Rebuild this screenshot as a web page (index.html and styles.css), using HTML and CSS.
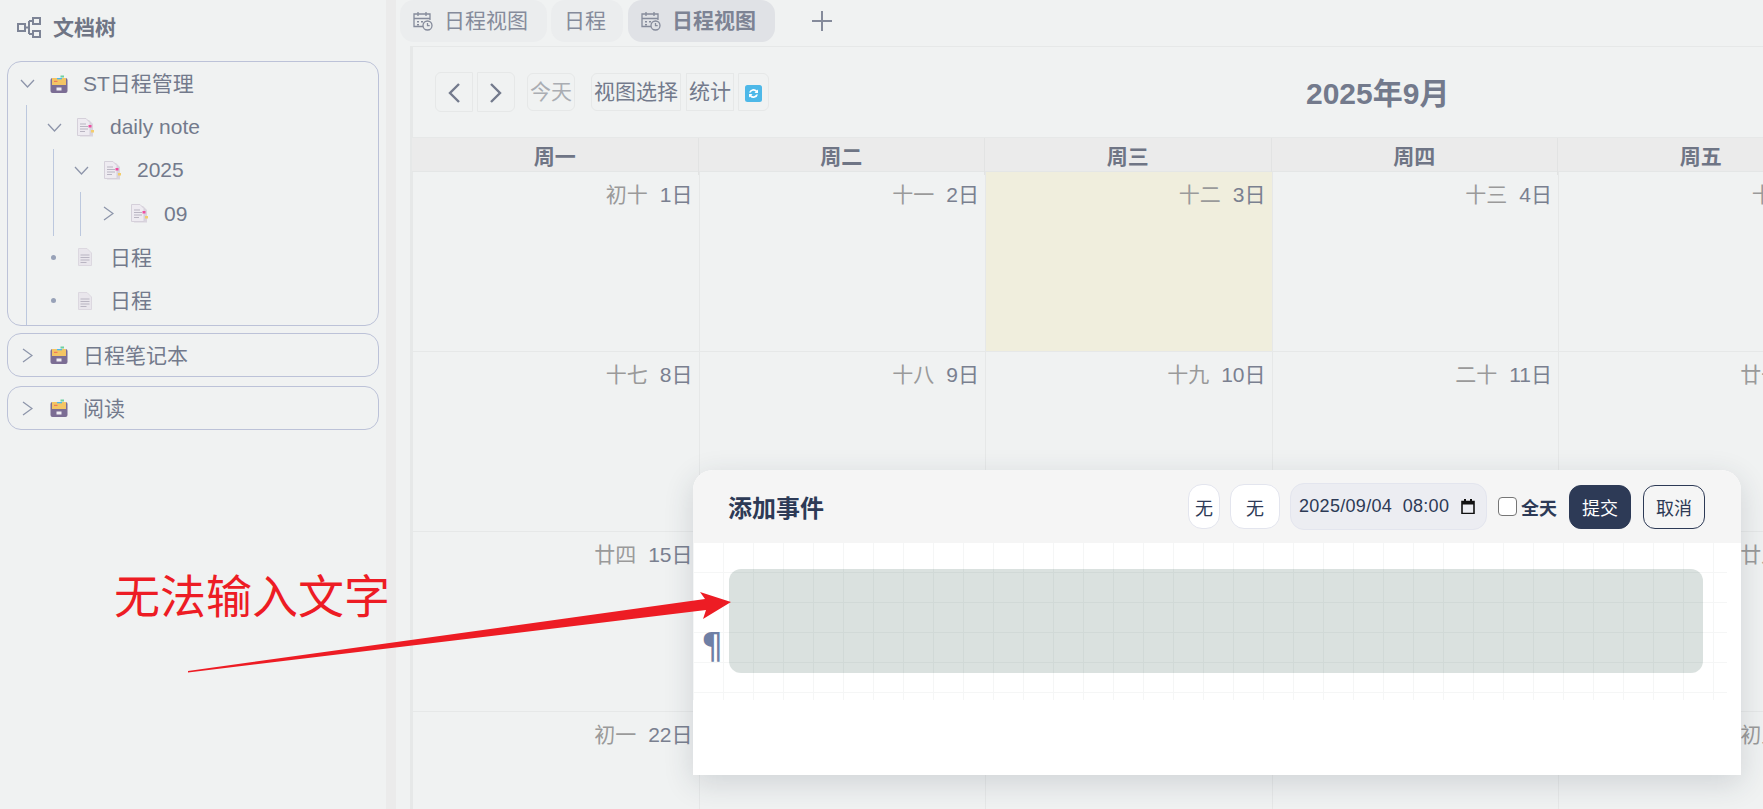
FILE: index.html
```html
<!DOCTYPE html>
<html lang="zh-CN">
<head>
    <meta charset="UTF-8">
    <meta name="viewport" content="width=device-width, initial-scale=1.0">
    <title>日程视图</title>
    <link rel="stylesheet" href="styles.css">
</head>
<body>
    <!-- shared icons -->
    <svg class="icon-defs" aria-hidden="true">
        <symbol id="i-down" viewBox="0 0 15 9"><path d="M1 1l6.500 7L14 1" fill="none" stroke="currentColor" stroke-width="1.300"/></symbol>
        <symbol id="i-right" viewBox="0 0 11 15"><path d="M1 1l9 6.500L1 14" fill="none" stroke="currentColor" stroke-width="1.300"/></symbol>
        <symbol id="i-box" viewBox="0 0 18 18">
            <path d="M.5 5a2 2 0 0 1 2-2h13a2 2 0 0 1 2 2v11a2 2 0 0 1-2 2h-13a2 2 0 0 1-2-2z" fill="#7b6d94"/>
            <path d="M2 3h14v7H2z" fill="#f4c564"/>
            <path d="M10.500 0.500h3.500v2h-3.500z" fill="#6fd1a0"/>
            <path d="M7 3h5v1.300H7z" fill="#4db8e8"/>
            <path d="M4 5.800h3.500v1.200H4z" fill="#ee7a5a"/>
            <path d="M6.500 12.500h5v3h-5z" fill="#f0eef4"/>
        </symbol>
        <symbol id="i-note" viewBox="0 0 17 19">
            <path d="M3 2h9l4 4v12.500H3z" fill="#d9d4de"/>
            <path d="M.5.5h8.500l4 4v13H.5z" fill="#eeebf1" stroke="#d5d0da"/>
            <path d="M3 6h6M3 8.500h8M3 11h8M3 13.500h5" stroke="#b9b5c2"/>
            <path d="M11.500 7h3v2.500h-3z" fill="#ee4fa0"/>
            <path d="M14 12h3v2.500h-3z" fill="#f3cd6c"/>
        </symbol>
        <symbol id="i-doc" viewBox="0 0 14 18">
            <path d="M.5.5h8.500l4.500 4.500v12.500H.5z" fill="#e9e6ec" stroke="#dcd8e0"/>
            <path d="M2.500 7h9M2.500 9.500h9M2.500 12h9M2.500 14.500h6" stroke="#b9b5c2"/>
        </symbol>
        <symbol id="i-cal" viewBox="0 0 20 20">
            <g fill="none" stroke="currentColor" stroke-width="1.300">
                <path d="M10 15.500H1V3h16v6M1 7.500h16M5 1v4M13 1v4"/>
                <circle cx="14.500" cy="14.500" r="4.500"/>
                <path d="M14.500 12v2.700h2.200"/>
            </g>
            <path d="M4 10h2v1.500H4zM8 10h2v1.500H8zM4 13h2v1.500H4z" fill="currentColor"/>
        </symbol>
    </svg>

    <div class="app">
        <aside class="sidebar">
            <h2 class="sidebar-title">
                <svg class="tree-logo" viewBox="0 0 24 21"><path d="M1 7h7v7H1zM16 1h7v6h-7zM16 14h7v6h-7zM8 10.500h4M12 4v13M12 4h4M12 17h4" fill="none" stroke="currentColor" stroke-width="2"/></svg>
                文档树
            </h2>

            <div class="notebook">
                <div class="row"><svg class="chev"><use href="#i-down"/></svg><svg class="ico-box"><use href="#i-box"/></svg><span>ST日程管理</span></div>
                <ul class="children">
                    <li>
                        <div class="row"><svg class="chev"><use href="#i-down"/></svg><svg class="ico-note"><use href="#i-note"/></svg><span class="latin">daily note</span></div>
                        <ul class="children">
                            <li>
                                <div class="row"><svg class="chev"><use href="#i-down"/></svg><svg class="ico-note"><use href="#i-note"/></svg><span class="latin">2025</span></div>
                                <ul class="children">
                                    <li><div class="row"><svg class="chev chev-right"><use href="#i-right"/></svg><svg class="ico-note"><use href="#i-note"/></svg><span class="latin">09</span></div></li>
                                </ul>
                            </li>
                        </ul>
                    </li>
                    <li><div class="row"><i class="dot"></i><svg class="ico-doc"><use href="#i-doc"/></svg><span>日程</span></div></li>
                    <li><div class="row"><i class="dot"></i><svg class="ico-doc"><use href="#i-doc"/></svg><span>日程</span></div></li>
                </ul>
            </div>

            <div class="notebook notebook-closed">
                <div class="row"><svg class="chev chev-right"><use href="#i-right"/></svg><svg class="ico-box"><use href="#i-box"/></svg><span>日程笔记本</span></div>
            </div>
            <div class="notebook notebook-closed">
                <div class="row"><svg class="chev chev-right"><use href="#i-right"/></svg><svg class="ico-box"><use href="#i-box"/></svg><span>阅读</span></div>
            </div>
        </aside>

        <div class="gutter"></div>

        <main class="main">
            <div class="tabs">
                <div class="tab tab-first"><svg class="tab-icon"><use href="#i-cal"/></svg>日程视图</div>
                <div class="tab tab-plain">日程</div>
                <div class="tab tab-active"><svg class="tab-icon"><use href="#i-cal"/></svg>日程视图</div>
                <div class="tab-add">
                    <svg viewBox="0 0 20 20"><path d="M10 0v20M0 10h20" stroke="currentColor" stroke-width="2"/></svg>
                </div>
            </div>

            <section class="calendar">
                <div class="toolbar">
                    <div class="tool-group">
                        <button class="btn btn-nav btn-left"><svg viewBox="0 0 14 22"><path d="M12 2L3 11l9 9" fill="none" stroke="currentColor" stroke-width="2.400"/></svg></button>
                        <button class="btn btn-nav btn-right"><svg viewBox="0 0 14 22"><path d="M2 2l9 9-9 9" fill="none" stroke="currentColor" stroke-width="2.400"/></svg></button>
                        <button class="btn btn-today">今天</button>
                        <button class="btn btn-view">视图选择</button>
                        <button class="btn btn-stat">统计</button>
                        <button class="btn btn-refresh">
                            <svg viewBox="0 0 17 17">
                                <rect width="17" height="17" rx="2.500" fill="#4db8e8"/>
                                <path d="M4 7.500a4.700 4.700 0 0 1 8-2l1-1v3.500H9.500l1.200-1.200A3 3 0 0 0 5.800 7.500zM13 9.500a4.700 4.700 0 0 1-8 2l-1 1V9h3.500l-1.200 1.200a3 3 0 0 0 4.900-.7z" fill="#fff"/>
                            </svg>
                        </button>
                    </div>
                    <h1 class="month-title">2025年9月</h1>
                </div>

                <div class="week-head">
                    <div>周一</div><div>周二</div><div>周三</div><div>周四</div><div>周五</div>
                </div>

                <div class="month-grid">
                    <div class="day"><span class="lunar">初十</span>1日</div>
                    <div class="day"><span class="lunar">十一</span>2日</div>
                    <div class="day day-today"><span class="lunar">十二</span>3日</div>
                    <div class="day"><span class="lunar">十三</span>4日</div>
                    <div class="day"><span class="lunar">十四</span>5日</div>

                    <div class="day"><span class="lunar">十七</span>8日</div>
                    <div class="day"><span class="lunar">十八</span>9日</div>
                    <div class="day"><span class="lunar">十九</span>10日</div>
                    <div class="day"><span class="lunar">二十</span>11日</div>
                    <div class="day"><span class="lunar">廿一</span>12日</div>

                    <div class="day"><span class="lunar">廿四</span>15日</div>
                    <div class="day"><span class="lunar">廿五</span>16日</div>
                    <div class="day"><span class="lunar">廿六</span>17日</div>
                    <div class="day"><span class="lunar">廿七</span>18日</div>
                    <div class="day"><span class="lunar">廿八</span>19日</div>

                    <div class="day"><span class="lunar">初一</span>22日</div>
                    <div class="day"><span class="lunar">初二</span>23日</div>
                    <div class="day"><span class="lunar">初三</span>24日</div>
                    <div class="day"><span class="lunar">初四</span>25日</div>
                    <div class="day"><span class="lunar">初五</span>26日</div>
                </div>
            </section>
        </main>
    </div>

    <!-- add event dialog -->
    <div class="modal">
        <div class="modal-head">
            <h3 class="modal-title">添加事件</h3>
            <div class="modal-controls">
                <button class="pill pill-narrow">无</button>
                <button class="pill pill-wide">无</button>
                <div class="date-field">
                    <span>2025/09/04&nbsp; 08:00</span>
                    <svg viewBox="0 0 14 15"><path d="M1 2.500h12v12H1z" fill="none" stroke="#111" stroke-width="1.600"/><path d="M1 2.500h12v3H1zM3 0h2v3H3zM9 0h2v3H9z" fill="#111"/></svg>
                </div>
                <label class="allday"><input type="checkbox">全天</label>
                <button class="action action-submit">提交</button>
                <button class="action action-cancel">取消</button>
            </div>
        </div>
        <div class="modal-body">
            <div class="editor">
                <span class="pilcrow">¶</span>
                <div class="editor-block"></div>
            </div>
        </div>
    </div>

    <!-- red annotation on top of the screenshot -->
    <div class="note-text">无法输入文字</div>
    <svg class="note-arrow" viewBox="0 0 1763 809">
        <polygon points="188,671 705,599 700,592 731,602 703,619 706,610 188,672.500" fill="#ed1c24"/>
    </svg>
</body>
</html>
```

FILE: styles.css
```css
* {
    box-sizing: border-box;
}

html, body {
    height: 100%;
}

body {
    margin: 0;
    overflow: hidden;
    background-color: #f0f2f2;
    color: #6f7585;
    font-family: "Liberation Sans", "Noto Sans CJK SC", sans-serif;
    font-size: 21px;
}

button {
    font-family: inherit;
    cursor: pointer;
}

.icon-defs {
    display: none;
}

.app {
    display: flex;
    height: 100%;
}

/* sidebar */
.sidebar {
    flex: 0 0 386px;
    padding: 0 7px;
    border-top-right-radius: 6px;
}

.sidebar-title {
    display: flex;
    align-items: center;
    height: 55px;
    margin: 0 0 6px;
    padding: 0 0 4px 10px;
    font-size: 21px;
    font-weight: bold;
    color: #6f7585;
}

.tree-logo {
    width: 24px;
    height: 21px;
    margin: 4px 12px 0 0;
    color: #7d8496;
}

.notebook {
    margin-bottom: 7px;
    border: 1px solid #bcc2d8;
    border-radius: 14px;
}

.notebook-closed {
    margin-bottom: 9px;
}

.notebook > .children {
    padding-bottom: 3px;
}

.row {
    display: flex;
    align-items: center;
    height: 43.4px;
    padding-left: 12px;
    color: #737a8c;
}

.row span {
    padding-bottom: 3px;
}

.row .latin {
    padding-bottom: 0;
}

.notebook-closed .row {
    height: 41.8px;
}

.children {
    list-style: none;
    margin: 0 0 0 18px;
    padding: 0 0 0 8px;
    border-left: 1px solid #bcc8de;
}

.chev {
    flex: none;
    width: 15px;
    height: 9px;
    margin-right: 15px;
    color: #8d95aa;
}

.chev-right {
    width: 11px;
    height: 15px;
    margin-left: 2px;
    margin-right: 17px;
}

.dot {
    flex: none;
    width: 5px;
    height: 5px;
    margin: 0 20px 0 4px;
    border-radius: 50%;
    background-color: #98a2b8;
}

.ico-box {
    width: 18px;
    height: 18px;
    margin-right: 15px;
}

.ico-note {
    width: 17px;
    height: 19px;
    margin-right: 16px;
}

.ico-doc {
    width: 14px;
    height: 18px;
    margin: 0 18px 0 2px;
}

.gutter {
    flex: 0 0 10px;
    background-color: #ebebeb;
}

/* tabs */
.main {
    flex: 1;
    min-width: 0;
    overflow: hidden;
}

.tabs {
    display: flex;
    align-items: center;
    height: 42px;
    margin: 0 0 4px 4px;
    gap: 4px;
}

.tab {
    display: flex;
    align-items: center;
    height: 42px;
    padding-bottom: 4px;
    background-color: #ebedee;
    color: #858b9b;
    white-space: nowrap;
}

.tab-first {
    width: 147px;
    padding-left: 13px;
    border-radius: 14px;
}

.tab-plain {
    width: 72px;
    padding-right: 4px;
    justify-content: center;
    border-radius: 14px;
}

.tab-active {
    width: 147px;
    margin-left: 1px;
    padding-left: 13px;
    border-radius: 14px;
    background-color: #e0e2e6;
    font-weight: bold;
    color: #7d8394;
}

.tab-icon {
    width: 20px;
    height: 20px;
    margin: 4px 11px 0 0;
    color: #858b9b;
}

.tab-add {
    width: 20px;
    height: 20px;
    margin-left: 33px;
    color: #858b9b;
}

.tab-add svg {
    display: block;
}

/* calendar */
.calendar {
    width: 2100px;
    height: 800px;
    margin-left: 14px;
    border-top: 1px solid #e6e8e8;
    border-left: 3px solid #e6e8e8;
}

.toolbar {
    display: flex;
    align-items: center;
    height: 90px;
    padding-left: 22px;
}

.tool-group {
    display: flex;
    align-items: center;
}

.btn {
    height: 38px;
    padding: 0 0 5px;
    border: 1px solid #e6e8e8;
    border-radius: 0;
    background: none;
    color: #737a8c;
    font-size: 21px;
    white-space: nowrap;
}

.btn-nav {
    width: 38px;
    height: 40px;
    padding: 0;
    color: #737a8c;
}

.btn-nav svg {
    width: 14px;
    height: 22px;
    vertical-align: middle;
}

.btn-left {
    border-radius: 6px 0 0 6px;
    margin-right: 4px;
}

.btn-right {
    border-radius: 0 6px 6px 0;
    margin-right: 12px;
}

.btn-today {
    width: 48px;
    margin-right: 16px;
    border-radius: 6px;
    color: #aaadb3;
}

.btn-view {
    width: 90px;
    margin-right: 5px;
    border-radius: 6px 0 0 6px;
}

.btn-stat {
    width: 48px;
    margin-right: 4px;
}

.btn-refresh {
    width: 31px;
    padding: 0;
    border-radius: 0 6px 6px 0;
}

.btn-refresh svg {
    width: 17px;
    height: 17px;
    vertical-align: middle;
}

.month-title {
    margin: 0 0 2px 537px;
    font-size: 30px;
    font-weight: bold;
    color: #737a8c;
}

.week-head,
.month-grid {
    display: grid;
    grid-template-columns: repeat(5, 286.5px);
}

.week-head {
    height: 35px;
    margin-left: -1px;
    background-color: #ebebeb;
    border-top: 1px solid #e6e8e8;
    border-bottom: 1px solid #e4e6e6;
}

.week-head div {
    border-right: 1px solid #e2e3e3;
    line-height: 37px;
    text-align: center;
    font-weight: bold;
    color: #6f7585;
}

.month-grid {
    grid-auto-rows: 180px;
}

.day {
    padding: 10px 6px 0 0;
    border-right: 1px solid #e6e8e8;
    border-bottom: 1px solid #e6e8e8;
    text-align: right;
    color: #7a8090;
    line-height: 26px;
}

.day-today {
    background-color: #f0eedd;
}

.lunar {
    margin-right: 12px;
    color: #9a9a9a;
}

/* add event dialog */
.modal {
    position: absolute;
    left: 693px;
    top: 470px;
    width: 1048px;
    height: 305px;
    border-radius: 20px 20px 0 0;
    background-color: #fff;
    box-shadow: 0 8px 30px rgba(40, 50, 70, 0.16);
}

.modal-head {
    display: flex;
    align-items: center;
    justify-content: space-between;
    height: 73px;
    padding: 0 36px 0 35px;
    border-radius: 20px 20px 0 0;
    background-color: #f5f5f5;
}

.modal-title {
    margin: 0;
    font-size: 24px;
    font-weight: bold;
    color: #2d3a56;
}

.modal-controls {
    display: flex;
    align-items: center;
    color: #2d3a56;
    font-size: 18px;
}

.pill {
    height: 45px;
    margin-right: 10px;
    padding: 0;
    border: 1px solid #e3e5ee;
    border-radius: 14px;
    background-color: #fff;
    color: #2d3a56;
    font-size: 18px;
}

.pill-narrow {
    width: 32px;
}

.pill-wide {
    width: 50px;
}

.date-field {
    display: flex;
    align-items: center;
    justify-content: space-between;
    width: 197px;
    height: 47px;
    margin-right: 11px;
    padding: 0 11px 0 8px;
    border: 1px solid #e3e5ee;
    border-radius: 14px;
    background-color: #ecedf2;
    letter-spacing: 0.3px;
}

.date-field svg {
    width: 14px;
    height: 15px;
}

.allday {
    display: flex;
    align-items: center;
    margin-right: 12px;
    font-size: 18px;
    font-weight: bold;
}

.allday input {
    appearance: none;
    width: 19px;
    height: 19px;
    margin: 0 4px 0 0;
    border: 1px solid #767676;
    border-radius: 4px;
    background-color: #fff;
}

.action {
    width: 62px;
    height: 44px;
    padding: 0;
    border: 1px solid #2d3a56;
    border-radius: 12px;
    font-size: 18px;
}

.action-submit {
    margin-right: 12px;
    background-color: #2d3a56;
    color: #fff;
}

.action-cancel {
    background-color: transparent;
    color: #2d3a56;
}

.modal-body {
    width: 1034px;
    height: 157px;
    background-image:
        linear-gradient(to right, transparent 29px, #f5f6f6 29px),
        linear-gradient(to bottom, transparent 29px, #f5f6f6 29px);
    background-position: 1px 0;
    background-size: 30px 30px;
}

.editor {
    display: flex;
    align-items: flex-end;
    padding: 26px 24px 0 10px;
}

.pilcrow {
    flex: 0 0 26px;
    margin: 0 0 9px -2px;
    font-family: "DejaVu Sans", sans-serif;
    font-size: 35px;
    line-height: 36px;
    color: #6f7fa5;
}

.editor-block {
    flex: 1;
    height: 104px;
    margin-left: 2px;
    border-radius: 12px;
    background-color: rgba(50, 90, 80, 0.18);
}

/* annotation */
.note-text {
    position: absolute;
    left: 114px;
    top: 565px;
    font-size: 46px;
    line-height: 64px;
    color: #ed1c24;
    white-space: nowrap;
}

.note-arrow {
    position: absolute;
    left: 0;
    top: 0;
    width: 1763px;
    height: 809px;
    pointer-events: none;
}
```
